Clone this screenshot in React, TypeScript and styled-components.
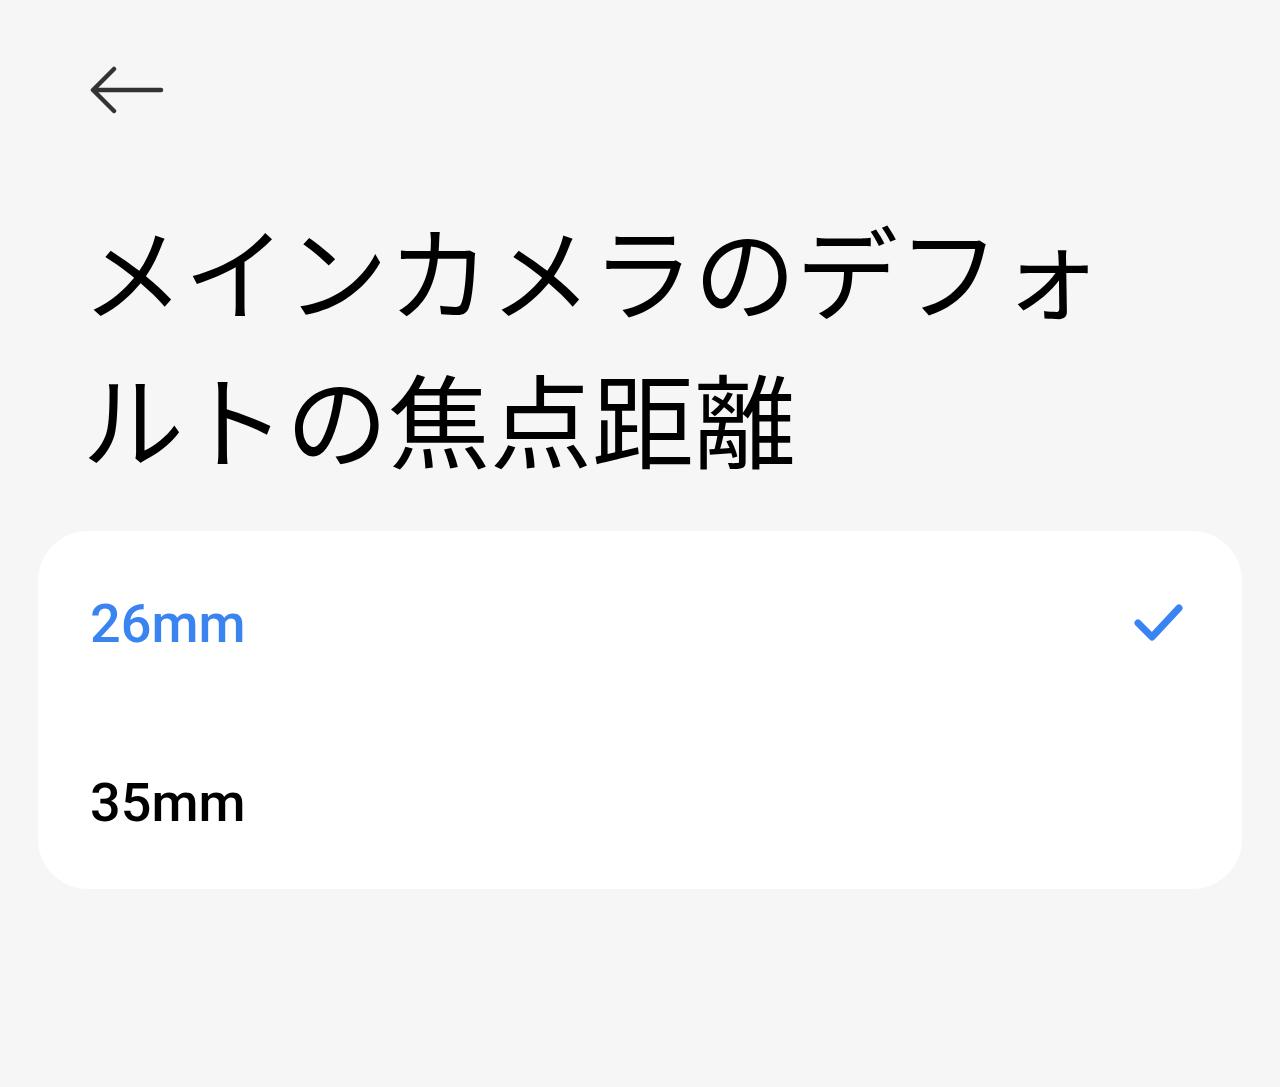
import styled, { createGlobalStyle } from 'styled-components';

const GlobalStyle = createGlobalStyle`
    html, body {
        margin: 0;
        padding: 0;
        background: #f6f6f6;
    }
    body {
        font-family: Roboto, "Noto Sans CJK JP", sans-serif;
    }
`;

const options = [
    { label: '26mm', selected: true },
    { label: '35mm', selected: false },
];

const App = () => {
    return (
        <>
            <GlobalStyle />
            <Page>
                <TopBar>
                    <BackButton aria-label="back">
                        <svg width="74" height="52" viewBox="0 0 74 52" fill="none">
                            <path
                                d="M71 24H4M24 3L3 24L24 45"
                                stroke="#333"
                                strokeWidth="4.5"
                                strokeLinecap="round"
                                strokeLinejoin="round"
                            />
                        </svg>
                    </BackButton>
                </TopBar>
                <Title>メインカメラのデフォルトの焦点距離</Title>
                <Card>
                    {options.map((o) => (
                        <Row key={o.label}>
                            <Label $selected={o.selected}>{o.label}</Label>
                            {o.selected && (
                                <svg width="54" height="44" viewBox="0 0 54 44" fill="none">
                                    <path
                                        d="M6 22L20 36L47 7"
                                        stroke="#3a84f2"
                                        strokeWidth="7"
                                        strokeLinecap="round"
                                        strokeLinejoin="round"
                                    />
                                </svg>
                            )}
                        </Row>
                    ))}
                </Card>
            </Page>
        </>
    );
};

export default App;

const Page = styled.div`
    min-height: 1087px;
    padding: 66px 38px 0 38px;
    box-sizing: border-box;
`;

const TopBar = styled.div`
    display: flex;
    align-items: center;
    height: 52px;
    padding-left: 52px;
`;

const BackButton = styled.button`
    border: none;
    background: none;
    padding: 0;
    display: flex;
    cursor: pointer;
`;

const Title = styled.h1`
    margin: 77px 0 0 44px;
    width: 1060px;
    font-family: "Noto Sans CJK JP", sans-serif;
    font-weight: 400;
    font-size: 102px;
    line-height: 148px;
    color: #000;
`;

const Card = styled.div`
    margin-top: 40px;
    background: #fff;
    border-radius: 50px;
    display: flex;
    flex-direction: column;
`;

const Row = styled.div`
    height: 179px;
    box-sizing: border-box;
    padding: 5px 56px 0 52px;
    display: flex;
    align-items: center;
    justify-content: space-between;
`;

const Label = styled.span<{ $selected: boolean }>`
    font-family: Roboto, sans-serif;
    font-weight: 500;
    font-size: 54px;
    color: ${(props) => (props.$selected ? '#3a84f2' : '#000')};
`;
